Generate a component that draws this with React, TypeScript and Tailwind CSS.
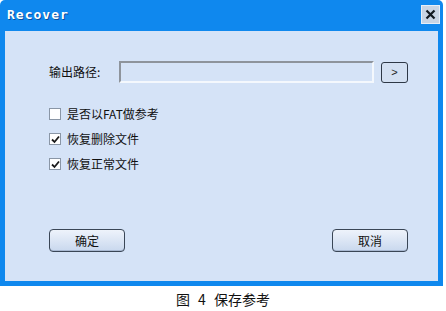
import React from 'react';

const cjk = { fontFamily: '"Noto Sans CJK SC", "Liberation Sans", sans-serif' };

function Check({ checked }: { checked: boolean }) {
  return (
    <span className="w-[12px] h-[12px] border border-[#8a96a6] bg-white flex items-center justify-center shrink-0">
      {checked && (
        <svg width="9" height="9" viewBox="0 0 9 9">
          <path d="M1 4.5 L3.5 7 L8 1.5" fill="none" stroke="#1a1a1a" strokeWidth="1.8" />
        </svg>
      )}
    </span>
  );
}

function WinButton({ label }: { label: string }) {
  return (
    <button
      className="w-[76px] h-[23px] rounded-[4px] border border-[#3a4656] bg-gradient-to-b from-[#eef3fb] to-[#c9d8ee] text-[12px] text-[#111] flex items-center justify-center shadow-[inset_0_-1px_0_#a9b9d2]"
      style={cjk}
    >
      {label}
    </button>
  );
}

export default function App() {
  return (
    <div className="w-[446px] h-[311px] bg-white relative">
      {/* window */}
      <div className="w-[443px] h-[286px] bg-[#0f88ee] rounded-t-[5px] flex flex-col">
        {/* title bar */}
        <div className="h-[31px] flex items-start justify-between pl-[7px] pr-[3px] pt-[5px]">
          <span
            className="text-white font-bold text-[13px] tracking-[1px] [text-shadow:1px_1px_0_#0a4f9e]"
            style={{ fontFamily: '"DejaVu Sans Mono", monospace' }}
          >
            Recover
          </span>
          <span className="w-[19px] h-[19px] border border-[#e6eef8] bg-[#c8d4e4] flex items-center justify-center">
            <svg width="11" height="11" viewBox="0 0 11 11">
              <path d="M1.5 1.5 L9.5 9.5 M9.5 1.5 L1.5 9.5" stroke="#101820" strokeWidth="2.2" />
            </svg>
          </span>
        </div>

        {/* body */}
        <div className="flex-1 mx-[5px] mb-[5px] bg-[#d5e3f7] flex flex-col pl-[44px] pt-[30px]">
          <div className="flex items-center h-[22px]">
            <span className="w-[70px] text-[12px] text-[#111]" style={cjk}>
              输出路径:
            </span>
            <div className="w-[255px] h-[22px] border-t-2 border-l-2 border-[#8e949c] border-b-2 border-r-2 border-b-[#f4f8fd] border-r-[#f4f8fd] bg-[#d5e3f7]" />
            <button
              className="ml-[7px] w-[27px] h-[21px] rounded-[3px] border border-[#2e3846] bg-[#d3e0f2] text-[11px] text-[#222] flex items-center justify-center"
              style={{ fontFamily: '"Liberation Sans", sans-serif' }}
            >
              &gt;
            </button>
          </div>

          <div className="flex flex-col gap-[13px] mt-[25px] text-[12px] text-[#111]" style={cjk}>
            <label className="flex items-center gap-[6px] h-[12px]">
              <Check checked={false} />
              是否以FAT做参考
            </label>
            <label className="flex items-center gap-[6px] h-[12px]">
              <Check checked />
              恢复删除文件
            </label>
            <label className="flex items-center gap-[6px] h-[12px]">
              <Check checked />
              恢复正常文件
            </label>
          </div>

          <div className="flex justify-between mt-[59px] w-[359px]">
            <WinButton label="确定" />
            <WinButton label="取消" />
          </div>
        </div>
      </div>

      {/* caption */}
      <div className="flex justify-center pt-[3px] text-[14px] text-[#111] [word-spacing:5px]" style={cjk}>
        图 4 保存参考
      </div>
    </div>
  );
}
